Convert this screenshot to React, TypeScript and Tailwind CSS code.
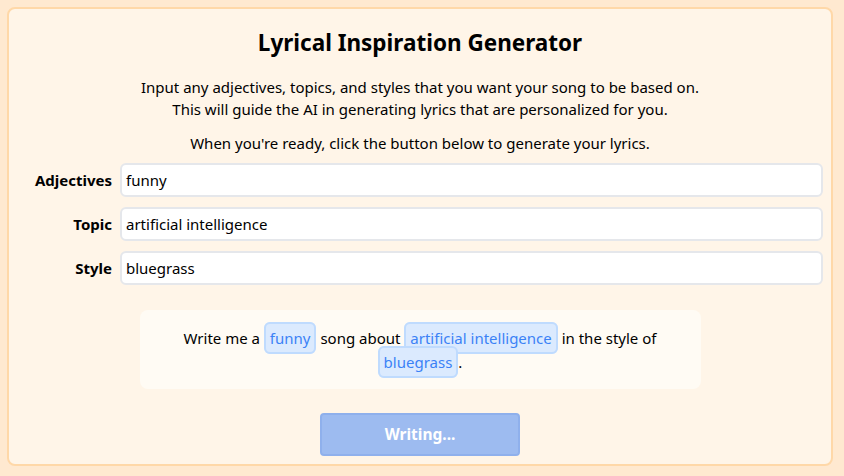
import React from "react";

const font = { fontFamily: '"Noto Sans", "Open Sans", sans-serif' };

function Row({ label, value }: { label: string; value: string }) {
  return (
    <div className="flex items-center gap-[8px]">
      <div className="w-[95px] text-right font-bold text-[15px] text-black">{label}</div>
      <div className="flex-1 h-[34px] bg-white border-2 border-[#e5e7eb] rounded-[6px] flex items-center px-[4px] text-[15px] text-black">
        {value}
      </div>
    </div>
  );
}

function Chip({ children }: { children: React.ReactNode }) {
  return (
    <span className="bg-[#dbeafe] border-2 border-[#bfdbfe] rounded-[6px] px-[4px] py-[4px] text-[#3b82f6] [box-decoration-break:clone]">
      {children}
    </span>
  );
}

export default function App() {
  return (
    <div className="w-[844px] h-[476px] bg-[#ffe9d0] pt-[7px] pl-[7px]" style={font}>
      <div className="w-[826px] h-[459px] bg-[#fff5e8] border-2 border-[#ffd8a8] rounded-[8px] flex flex-col items-center px-[8px]">
        <h1 className="mt-[19px] text-[22.5px] font-bold text-black leading-[30px]">Lyrical Inspiration Generator</h1>
        <p className="mt-[18px] text-[15px] leading-[22px] text-black text-center">
          Input any adjectives, topics, and styles that you want your song to be based on.
          <br />
          This will guide the AI in generating lyrics that are personalized for you.
        </p>
        <p className="mt-[12px] text-[15px] leading-[22px] text-black text-center">
          When you're ready, click the button below to generate your lyrics.
        </p>
        <div className="mt-[9px] w-full flex flex-col gap-[10px]">
          <Row label="Adjectives" value="funny" />
          <Row label="Topic" value="artificial intelligence" />
          <Row label="Style" value="bluegrass" />
        </div>
        <div className="mt-[25px] w-[561px] h-[79px] bg-[#fffbf4] rounded-[8px] flex items-center justify-center px-[40px]">
          <p className="text-[15px] leading-[24px] text-black text-center">
            Write me a <Chip>funny</Chip> song about <Chip>artificial intelligence</Chip> in the style of <Chip>bluegrass</Chip>.
          </p>
        </div>
        <button className="mt-[24px] w-[200px] h-[43px] bg-[#9dbbf0] border-2 border-[#8fb0ec] rounded-[4px] text-white font-bold text-[15.5px]">
          Writing...
        </button>
      </div>
    </div>
  );
}
